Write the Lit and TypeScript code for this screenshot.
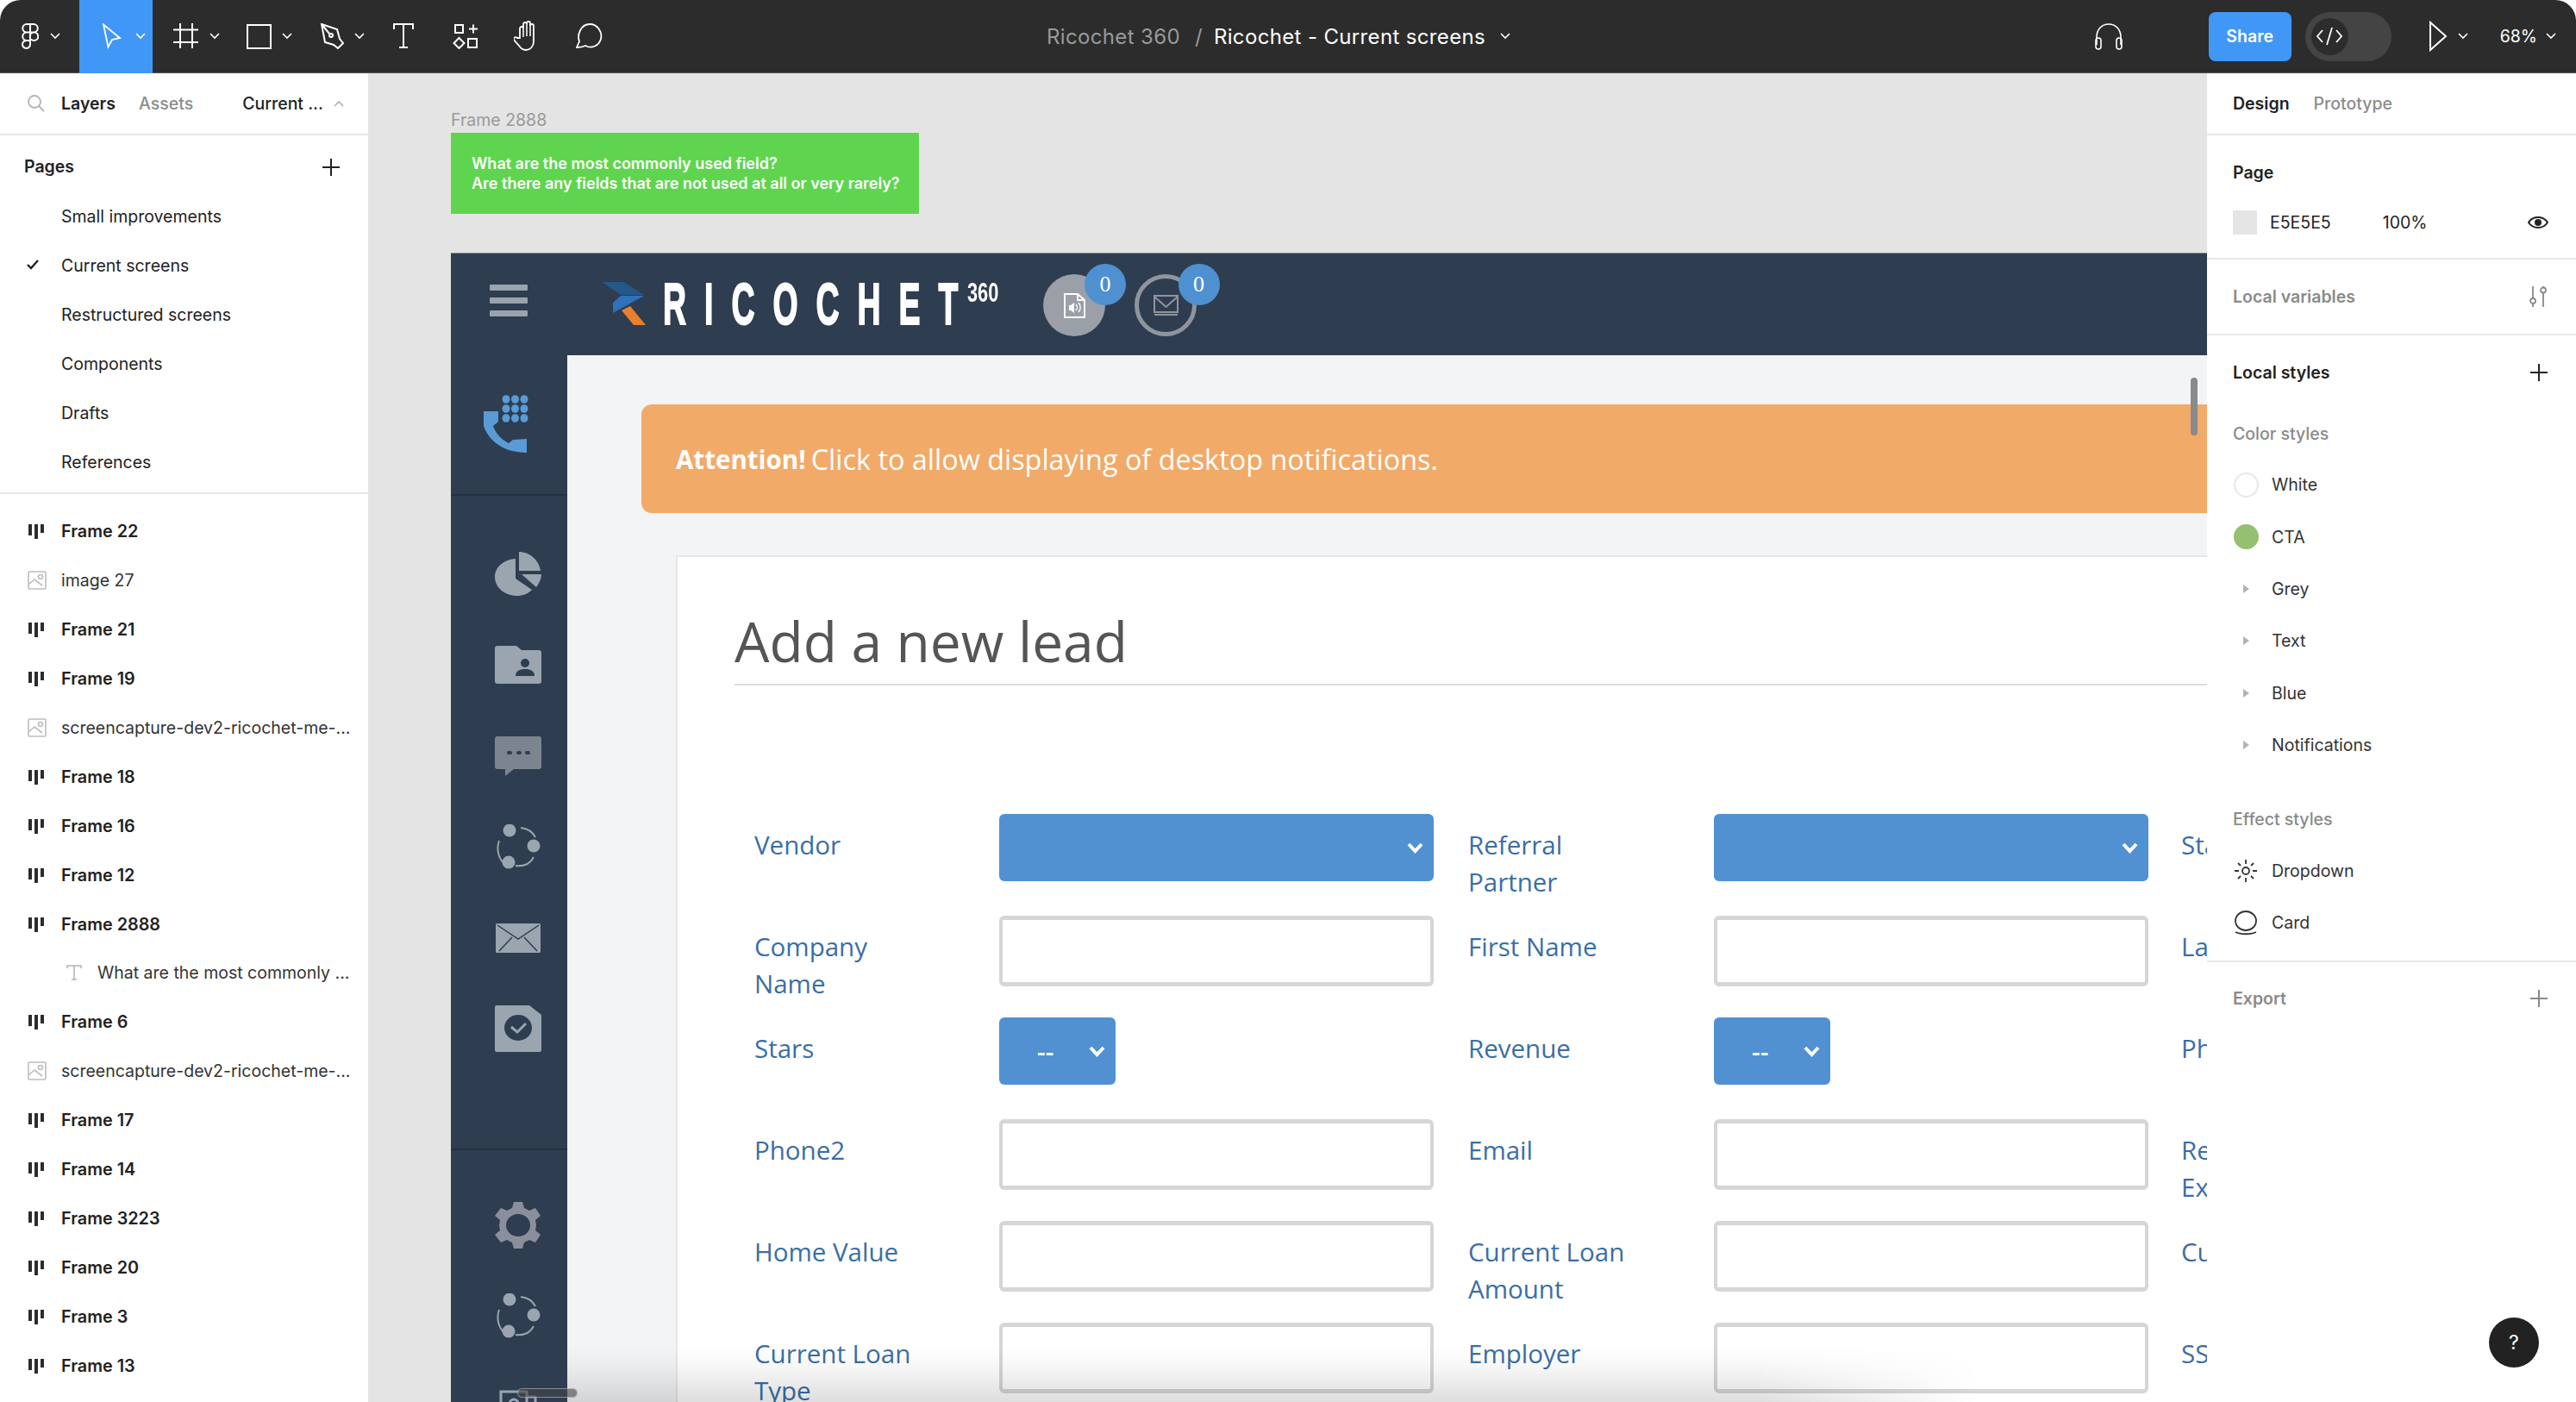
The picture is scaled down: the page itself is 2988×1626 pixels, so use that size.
import { LitElement, html, css, svg } from "lit";
import { customElement } from "lit/decorators.js";

const chev = html`<svg class="chev" viewBox="0 0 14 10"><path d="M2 2l5 5 5-5" fill="none" stroke="#fff" stroke-width="1.6"/></svg>`;
const s = (w: number, h: number, body: unknown, cls = "") =>
  html`<svg class=${cls} width=${w} height=${h} viewBox="0 0 ${w} ${h}" fill="none" stroke="#fff" stroke-width="2">${body}</svg>`;

const icons = {
  figma: s(20, 30, svg`<path d="M10 1H6a4.5 4.5 0 000 9.500h4zM10 1h4a4.500 4.500 0 010 9.500h-4zM10 10.500H6a4.500 4.500 0 000 9.500h4zM14.500 10.500a4.700 4.700 0 110 9.500 4.700 4.700 0 010-9.500zM10 20H6a4.500 4.500 0 104 4.500z"/>`),
  cursor: s(24, 30, svg`<path d="M3 1.500L22 17l-9 2-4.500 8.500z" stroke-width="1.800" transform="translate(-1 0)"/>`),
  frame: s(30, 30, svg`<path d="M8 0v29M22 0v29M0 7.500h29M0 22h29"/>`),
  rect: s(29, 29, svg`<rect x="1" y="1" width="27" height="27"/>`),
  pen: s(28, 30, svg`<path d="M2 1l18 6 3 11 4 5-6 6-5-4-10-3zM2 1l9 11"/><circle cx="13" cy="14" r="2"/>`),
  text: s(24, 30, svg`<path d="M1 7V1h22v6M12 1v27M7 28h10"/>`),
  comps: s(30, 30, svg`<rect x="3" y="2" width="9" height="9"/><path d="M19 6.500h10M24 1.500v10M7.500 17l6 6-6 6-6-6z"/><rect x="18" y="18" width="10" height="10"/>`),
  hand: s(32, 36, svg`<path d="M7 20V9a2 2 0 014 0v-5a2 2 0 014 0v-1a2 2 0 014 0v3a2 2 0 014 0v18c0 6-4 10-9 10-4 0-6-2-8-5l-6-7c-1-2 2-4 4-2z" stroke-width="1.800"/><path d="M11 9v10M15 4v14M19 4v14" stroke-width="1.500"/>`),
  comment: s(32, 30, svg`<path d="M1 28l3-7C1 13 6 1 16 1c9 0 15 9 13 17-2 8-11 12-18 8-2 1-6 2-10 2z" stroke-width="1.800"/>`),
  phones: s(34, 32, svg`<path d="M17 2C8 2 3 9 3 17v9M17 2c9 0 14 7 14 15v9" stroke-width="1.600"/><rect x="2" y="18" width="6" height="13" rx="3" stroke-width="1.600"/><rect x="26" y="18" width="6" height="13" rx="3" stroke-width="1.600"/>`),
  play: s(22, 36, svg`<path d="M2 2l18 16L2 34z" stroke-width="2"/>`),
  code: s(30, 24, svg`<path d="M7 5l-6 7 6 7M23 5l6 7-6 7M18 2l-6 20" stroke-width="1.800"/>`),
};

const frameIco = html`<svg class="li" width="20" height="18" viewBox="0 0 20 18"><g fill="#2c2c2c"><rect x="1" y="1" width="4" height="13"/><rect x="8" y="1" width="4" height="17"/><rect x="15" y="1" width="4" height="10"/></g></svg>`;
const imgIco = html`<svg class="li" width="22" height="22" viewBox="0 0 22 22" fill="none" stroke="#bdbdbd" stroke-width="1.600"><rect x="1" y="1" width="20" height="20" rx="1"/><circle cx="15" cy="7" r="2.500"/><path d="M1 16l7-6 9 7"/></svg>`;
const tIco = html`<svg class="li" width="20" height="20" viewBox="0 0 20 20" fill="none" stroke="#b3b3b3" stroke-width="1.500"><path d="M2 5V2h16v3M10 2v16M7 18h6"/></svg>`;

const pages = ["Small improvements", "Current screens", "Restructured screens", "Components", "Drafts", "References"];
const layers: [string, string][] = [
  ["f", "Frame 22"], ["i", "image 27"], ["f", "Frame 21"], ["f", "Frame 19"],
  ["i", "screencapture-dev2-ricochet-me-..."], ["f", "Frame 18"], ["f", "Frame 16"], ["f", "Frame 12"],
  ["f", "Frame 2888"], ["t", "What are the most commonly ..."], ["f", "Frame 6"],
  ["i", "screencapture-dev2-ricochet-me-..."], ["f", "Frame 17"], ["f", "Frame 14"], ["f", "Frame 3223"],
  ["f", "Frame 20"], ["f", "Frame 3"], ["f", "Frame 13"],
];

const net = html`<svg width="54" height="52" viewBox="0 0 54 52" fill="none"><path d="M5 19C1 30 5 42 13 47M30 4c9 1 14 5 17 11M24 48c9 1 17-2 21-10" stroke="#9aa5b0" stroke-width="2"/><circle cx="17" cy="7" r="7.500" fill="#9aa5b0"/><circle cx="45" cy="25" r="7.500" fill="#9aa5b0"/><circle cx="16" cy="44" r="7.500" fill="#9aa5b0"/></svg>`;
const side = [
  html`<svg width="54" height="52" viewBox="0 0 54 52"><path d="M24 8v23l19 13C38 49 32 51 26 51 11 51 0 41 0 29 0 18 10 9 24 8z" fill="#9aa5b0"/><path d="M28 0c12 0 23 9 25 22H28z" fill="#9aa5b0"/><path d="M31 26h23c0 5-3 11-6 15z" fill="#9aa5b0"/></svg>`,
  html`<svg width="54" height="44" viewBox="0 0 54 44"><path d="M3 0h22l6 5h20a3 3 0 013 3v33a3 3 0 01-3 3H3a3 3 0 01-3-3V3a3 3 0 013-3z" fill="#9aa5b0"/><ellipse cx="35" cy="20" rx="5" ry="5" fill="#2e3d50"/><path d="M24 35c0-6 5-8 11-8s11 2 11 8z" fill="#2e3d50"/></svg>`,
  html`<svg width="54" height="46" viewBox="0 0 54 46"><path d="M3 0h48a3 3 0 013 3v32a3 3 0 01-3 3H22l-10 8 0-8H3a3 3 0 01-3-3V3a3 3 0 013-3z" fill="#7c848f"/><g fill="#2e3d50"><rect x="14" y="17" width="6" height="4" rx="2"/><rect x="25" y="17" width="6" height="4" rx="2"/><rect x="35" y="17" width="6" height="4" rx="2"/></g></svg>`,
  net,
  html`<svg width="52" height="34" viewBox="0 0 52 34"><rect width="52" height="34" rx="1.500" fill="#9aa5b0"/><path d="M2 2l24 16L50 2M4 32l15-16M48 32L33 16" fill="none" stroke="#2e3d50" stroke-width="1.500"/></svg>`,
  html`<svg width="54" height="54" viewBox="0 0 54 54"><path d="M2 0h38l14 11v41a2 2 0 01-2 2H2a2 2 0 01-2-2V2a2 2 0 012-2z" fill="#9aa5b0"/><ellipse cx="27" cy="26" rx="16" ry="15" fill="#2e3d50"/><path d="M19 25l7 6 10-10" fill="none" stroke="#9aa5b0" stroke-width="3"/></svg>`,
];
const gear = html`<svg width="54" height="54" viewBox="0 0 54 54"><path d="M22 0h10l2 7 6 3 7-3 6 9-6 5 1 6-1 6 6 5-6 9-7-3-6 3-2 7H22l-2-7-6-3-7 3-7-9 6-5-1-6 1-6-6-5 7-9 7 3 6-3z" fill="#8b8f9c"/><ellipse cx="27" cy="27" rx="14" ry="13" fill="#2e3d50"/></svg>`;
const contact = html`<svg width="44" height="40" viewBox="0 0 44 40" fill="none" stroke="#9aa5b0" stroke-width="3"><rect x="2" y="2" width="30" height="36"/><path d="M32 8h10v30H32"/><circle cx="17" cy="16" r="5"/></svg>`;

const fields: [string, string][] = [
  ["Vendor", "sel"], ["Referral<br>Partner", "sel"], ["Stage", ""],
  ["Company<br>Name", "inp"], ["First Name", "inp"], ["Last Name", ""],
  ["Stars", "mini"], ["Revenue", "mini"], ["Phone", ""],
  ["Phone2", "inp"], ["Email", "inp"], ["Referral<br>Exec", ""],
  ["Home Value", "inp"], ["Current Loan<br>Amount", "inp"], ["Current", ""],
  ["Current Loan<br>Type", "inp"], ["Employer", "inp"], ["SSN", ""],
];
const selChev = html`<svg class="schev" width="23" height="15" viewBox="0 0 23 15"><path d="M4 3l7.500 8L19 3" fill="none" stroke="#fff" stroke-width="4"/></svg>`;

@customElement("app-root")
export class AppRoot extends LitElement {
  static styles = css`
    :host { display: block; width: 2988px; height: 1626px; overflow: hidden; background: #fff; font-family: Inter, "Liberation Sans", sans-serif; color: #222; }
    * { box-sizing: border-box; }
    .top { height: 85px; background: #2c2c2c; border-radius: 24px 24px 0 0; display: flex; align-items: center; color: #fff; border-bottom: 1px solid #555; }
    .tools { display: flex; height: 85px; width: 717px; flex: none; }
    .tool { display: flex; align-items: center; width: 85px; padding-left: 24px; gap: 11px; flex: none; }
    .tool svg:first-child { flex: none; }
    .tool.first { width: 92px; padding-left: 25px; gap: 12px; }
    .tool.on { background: #4097f6; padding-left: 26px; gap: 14px; }
    .tool.plain { justify-content: center; padding: 0; width: 72px; }
    .chev { width: 14px; height: 10px; flex: none; }
    .title { margin-left: 497px; font-size: 24px; display: flex; align-items: center; letter-spacing: .35px; white-space: nowrap; }
    .title .dim { color: #9a9a9a; }
    .title .slash { color: #9a9a9a; margin: 0 13px 0 17px; }
    .title .chev { margin-left: 16px; }
    .tright { margin-left: auto; display: flex; align-items: center; padding-right: 22px; }
    .share { width: 96px; height: 57px; background: #4097f6; border-radius: 8px; font-size: 19.500px; font-weight: 600; display: flex; align-items: center; justify-content: center; margin: 0 16px 0 99px; }
    .toggle { width: 100px; height: 57px; background: #444; border-radius: 29px; padding: 7px; margin-right: 43px; }
    .knob { width: 43px; height: 43px; border-radius: 50%; background: #2c2c2c; display: flex; align-items: center; justify-content: center; }
    .pct { font-size: 19.500px; margin: 0 9px 0 auto; }
    .play { display: flex; align-items: center; gap: 11px; margin-right: 36px; }
    .main { display: flex; height: 1541px; }
    .left { width: 427px; flex: none; overflow: hidden; background: #fff; position: relative; z-index: 2; }
    .lhead { height: 72px; border-bottom: 2px solid #e8e8e8; display: flex; align-items: center; font-size: 19.500px; font-weight: 600; padding-left: 32px; white-space: nowrap; }
    .lhead .mag { margin-right: 19px; flex: none; }
    .lhead .dim { color: #8c8c8c; font-weight: 500; margin-left: 27px; }
    .lhead .cur { color: #222; font-weight: 500; margin-left: 57px; }
    .lhead .up { margin-left: 11px; }
    .sec { display: flex; justify-content: space-between; align-items: center; font-weight: 600; font-size: 19.500px; padding: 0 33px 0 28px; height: 74px; }
    .sec span { line-height: 1; }
    .pages { border-bottom: 2px solid #e8e8e8; padding-bottom: 7px; margin-top: -9px; }
    .row { height: 57px; display: flex; align-items: center; font-size: 19.500px; padding-left: 71px; position: relative; white-space: nowrap; }
    .row .tick { position: absolute; left: 30px; top: 21px; }
    .lrow { height: 56.900px; display: flex; align-items: center; font-size: 19.500px; padding-left: 32px; white-space: nowrap; color: #333; }
    .lrow.f { font-weight: 600; color: #222; font-size: 19.800px; }
    .lrow.t { padding-left: 76px; }
    .ico { width: 39px; flex: none; display: flex; }
    .lrow.t .ico { width: 37px; }
    .layers { padding-top: 15px; }
    .canvas { flex: 1; background: #e4e4e4; padding: 40px 0 0 96px; overflow: hidden; position: relative; min-width: 0; }
    .flabel { font-size: 19.500px; color: #999; line-height: 29px; }
    .green { width: 543px; height: 94px; background: #5fd54f; color: #fff; font-weight: 600; font-size: 18px; line-height: 23px; padding: 24px 24px; white-space: nowrap; }
    .app { margin-top: 45px; width: 2037px; height: 1333px; background: #2e3d50; overflow: hidden; border-top: 1px solid #8c939b; }
    .ahead { height: 118px; display: flex; align-items: center; position: relative; }
    .burger { width: 44px; margin-left: 45px; display: grid; gap: 8px; margin-top: -10px; flex: none; }
    .burger i { display: block; height: 7px; border-radius: 1px; background: #9aa3ad; }
    .logo { margin-left: 86px; display: flex; align-items: flex-start; margin-top: -2px; flex: none; }
    .word { color: #fff; font-family: "Liberation Sans", sans-serif; font-weight: 700; font-size: 68px; line-height: 50px; height: 50px; width: 346px; margin-left: 20px; transform-origin: 0 50%; transform: scaleX(.55); white-space: nowrap; -webkit-text-stroke: 2px #fff; }
    .word span { letter-spacing: 38.200px; }
    .sup { color: #fff; font-family: "Liberation Sans", sans-serif; font-weight: 700; font-size: 32px; line-height: 24px; transform-origin: 0 0; transform: scaleX(.68); margin-left: 7px; width: 40px; }
    .circs { display: flex; margin-left: 48px; margin-top: 2px; gap: 34px; flex: none; }
    .circ { width: 72px; height: 72px; border-radius: 50%; position: relative; background: #9a9fa8; display: flex; align-items: center; justify-content: center; }
    .circ.out { background: none; border: 5px solid #8f959d; }
    .badge { position: absolute; width: 48px; height: 48px; border-radius: 50%; background: #4f90d0; color: #fff; font-family: "Liberation Serif", serif; font-size: 26px; display: flex; align-items: center; justify-content: center; left: 48px; top: -12px; }
    .circ.out .badge { left: 45.500px; top: -17px; }
    .abody { display: flex; height: 1215px; }
    .side { width: 135px; flex: none; }
    .sphone { height: 163px; border-bottom: 2px solid #27313f; padding: 45px 0 0 38px; }
    .sgroup { padding-top: 38px; height: 757px; }
    .sgroup + .sgroup { height: auto; border-top: 2px solid #27313f; padding-top: 34px; }
    .sitem { height: 105.500px; display: flex; align-items: center; justify-content: center; padding-left: 20px; }
    .content { flex: 1; background: #f3f4f6; min-width: 0; overflow: hidden; font-family: "Open Sans", sans-serif; }
    .alert { margin: 57px 0 0 86px; height: 126px; background: #f2aa68; border-radius: 12px 0 0 12px; color: #fff; font-size: 32.400px; display: flex; align-items: center; padding-left: 40px; white-space: nowrap; }
    .alert b { font-weight: 700; margin-right: 6px; font-size: 29.500px; }
    .card { margin: 49px 0 0 126px; height: 1000px; background: #fff; border: 2px solid #e6e6e6; border-right: 0; padding: 0 0 0 66px; }
    .h1 { height: 149px; font-size: 64px; color: #555; border-bottom: 2px solid #ddd; padding-top: 54px; line-height: 88px; }
    .form { margin-top: 149px; display: grid; grid-template-columns: 284px 504px 40px 285px 504px 38px 300px; grid-auto-rows: 118px; padding-left: 23px; }
    .lbl { font-size: 29.500px; line-height: 43px; color: #3a6ea5; padding-top: 14px; white-space: nowrap; }
    .ctl { height: 78px; }
    .sel { background: #5191d1; border-radius: 6px; display: flex; align-items: center; justify-content: flex-end; padding-right: 10px; }
    .mini { width: 135px; background: #5191d1; border-radius: 6px; display: flex; align-items: center; justify-content: space-between; color: #fff; font-size: 30px; padding: 0 10px 0 44px; font-weight: 600; }
    .inp { border: 4px solid #d6d6d6; border-width: 5px 4px; border-radius: 6px; background: #fff; height: 82px; }
    .sb { position: absolute; }
    .sb.v { left: 2114px; top: 353px; width: 8px; height: 67px; background: #8a8a8a; border-radius: 4px; }
    .sb.h { left: 173px; top: 1525px; width: 70px; height: 11px; background: rgba(70,70,70,.6); border: 1px solid rgba(255,255,255,.4); border-radius: 6px; }
    .shade { position: absolute; left: 231px; width: 1640px; bottom: 0; height: 64px; pointer-events: none; background: linear-gradient(to top, rgba(0,0,0,.13), rgba(0,0,0,.03) 65%, rgba(0,0,0,0)); -webkit-mask-image: linear-gradient(to right, #000 84%, transparent); mask-image: linear-gradient(to right, #000 84%, transparent); }
    .right { width: 428px; flex: none; background: #fff; font-size: 19.500px; position: relative; z-index: 2; }
    .rhead { height: 72px; border-bottom: 2px solid #e8e8e8; display: flex; align-items: center; padding-left: 30px; gap: 28px; font-weight: 600; }
    .rhead .dim { color: #8c8c8c; font-weight: 500; }
    .rpage { height: 144px; padding: 28px 30px 0; border-bottom: 2px solid #e8e8e8; }
    .rt { font-weight: 600; line-height: 30px; }
    .rfill { display: flex; align-items: center; margin-top: 29px; height: 28px; }
    .swatch { width: 28px; height: 28px; background: #e5e5e5; margin-right: 15px; }
    .pc { margin-left: 60px; }
    .eye { margin-left: auto; margin-right: 2px; }
    .rsec { padding: 0 33px 0 30px; display: flex; align-items: center; justify-content: space-between; font-weight: 600; }
    .rvars { height: 88px; color: #8a8a8a; border-bottom: 2px solid #e8e8e8; }
    .rsty { height: 86px; }
    .rsub { height: 40px; padding: 0 30px; display: flex; align-items: center; color: #8a8a8a; font-weight: 500; }
    .rsub.first { margin-top: 8px; }
    .ritem { height: 60.400px; display: flex; align-items: center; padding-left: 30px; font-weight: 400; color: #333; }
    .ritem.a { margin-top: 9px; }
    .ritem .ib { width: 45px; flex: none; display: flex; align-items: center; justify-content: center; padding-right: 15px; }
    .dot { width: 29px; height: 29px; border-radius: 50%; flex: none; }
    .dot.w { background: #fff; border: 2px solid #e8e8e8; }
    .dot.g { background: #95c06f; }
    .tri { width: 0; height: 0; border-left: 7px solid #b3b3b3; border-top: 5px solid transparent; border-bottom: 5px solid transparent; }
    .gap { height: 36px; }
    .rexp { height: 86px; color: #8a8a8a; border-top: 2px solid #e8e8e8; margin-top: 14px; }
    .help { position: absolute; left: 327px; top: 1443px; width: 58px; height: 58px; border-radius: 50%; background: #222; color: #fff; display: flex; align-items: center; justify-content: center; font-size: 23px; }
  `;

  private plus(color = "#222") {
    return html`<svg width="20" height="20" viewBox="0 0 20 20" fill="none" stroke=${color} stroke-width="2"><path d="M10 0v20M0 10h20"/></svg>`;
  }

  render() {
    return html`
      <div class="top">
        <div class="tools">
          <div class="tool first">${icons.figma}${chev}</div>
          <div class="tool on">${icons.cursor}${chev}</div>
          <div class="tool">${icons.frame}${chev}</div>
          <div class="tool">${icons.rect}${chev}</div>
          <div class="tool">${icons.pen}${chev}</div>
          <div class="tool plain">${icons.text}</div>
          <div class="tool plain">${icons.comps}</div>
          <div class="tool plain">${icons.hand}</div>
          <div class="tool plain">${icons.comment}</div>
        </div>
        <div class="title"><span class="dim">Ricochet 360</span><span class="slash">/</span><span>Ricochet - Current screens</span>${chev}</div>
        <div class="tright">
          ${icons.phones}
          <div class="share">Share</div>
          <div class="toggle"><div class="knob">${icons.code}</div></div>
          <div class="play">${icons.play}${chev}</div>
          <div class="pct">68%</div>${chev}
        </div>
      </div>
      <div class="main">
        <aside class="left">
          <div class="lhead">
            <svg class="mag" width="20" height="20" viewBox="0 0 20 20" fill="none" stroke="#b3b3b3" stroke-width="1.800"><circle cx="8" cy="8" r="7"/><path d="M13 13l6 6"/></svg>
            <span>Layers</span><span class="dim">Assets</span><span class="cur">Current ...</span>
            <svg class="up" width="14" height="10" viewBox="0 0 14 10" fill="none" stroke="#aaa" stroke-width="1.500"><path d="M2 8l5-5 5 5"/></svg>
          </div>
          <div class="sec"><span>Pages</span>${this.plus()}</div>
          <div class="pages">
            ${pages.map((p, i) => html`<div class="row">${i === 1 ? html`<svg class="tick" width="16" height="14" viewBox="0 0 16 14" fill="none" stroke="#222" stroke-width="2.400"><path d="M2 7l4 4 8-9"/></svg>` : ""}${p}</div>`)}
          </div>
          <div class="layers">
            ${layers.map(([k, n]) => html`<div class="lrow ${k}"><span class="ico">${k === "f" ? frameIco : k === "i" ? imgIco : tIco}</span>${n}</div>`)}
          </div>
        </aside>
        <section class="canvas">
          <div class="flabel">Frame 2888</div>
          <div class="green">What are the most commonly used field?<br>Are there any fields that are not used at all or very rarely?</div>
          <div class="app">
            <div class="ahead">
              <div class="burger"><i></i><i></i><i></i></div>
              <div class="logo">
                <svg width="51" height="50" viewBox="0 0 51 50"><path d="M0 0h25l24 15H22z" fill="#24578a"/><path d="M22 16h27L13 36V24z" fill="#2f72b8"/><path d="M23 33l10-5 18 22H37z" fill="#e8802e"/></svg>
                <div class="word"><span>RICOCHE</span>T</div><div class="sup">360</div>
              </div>
              <div class="circs">
                <div class="circ">
                  <svg width="25" height="29" viewBox="0 0 25 29" fill="none" stroke="#fff" stroke-width="2"><path d="M1 1h15l8 7v20H1zM16 1v7h8"/><path d="M6 14v6h2l4 3V11l-4 3z" fill="#fff" stroke="none"/><path d="M14 13a5 5 0 010 7M17 11a8 8 0 010 11" stroke-width="1.300"/></svg>
                  <span class="badge">0</span>
                </div>
                <div class="circ out">
                  <svg width="29" height="24" viewBox="0 0 29 24" fill="none" stroke="#8f959d" stroke-width="2"><rect x="1" y="1" width="27" height="19"/><path d="M1 2l13.500 12L28 2M1 23h27"/></svg>
                  <span class="badge">0</span>
                </div>
              </div>
            </div>
            <div class="abody">
              <div class="side">
                <div class="sphone">
                  <svg width="54" height="68" viewBox="0 0 54 68"><g fill="#5a9bd5">${[0, 1, 2].flatMap((r) => [0, 1, 2].map((c) => svg`<ellipse cx=${26 + c * 10.5} cy=${6 + r * 11} rx="4.500" ry="4.800"/>`))}<path d="M0 20h17v12l-6 5c3 9 10 16 18 20l5-4 16-1v16C30 68 8 60 0 37z"/></g></svg>
                </div>
                <div class="sgroup">${side.map((i) => html`<div class="sitem">${i}</div>`)}</div>
                <div class="sgroup">
                  <div class="sitem">${gear}</div>
                  <div class="sitem">${net}</div>
                  <div class="sitem">${contact}</div>
                </div>
              </div>
              <div class="content">
                <div class="alert"><b>Attention!</b> Click to allow displaying of desktop notifications.</div>
                <div class="card">
                  <div class="h1">Add a new lead</div>
                  <div class="form">
                    ${fields.map(([l, k], i) => html`
                      <div class="lbl" .innerHTML=${l}></div>
                      ${k === "sel" ? html`<div class="ctl sel">${selChev}</div>` : k === "mini" ? html`<div class="ctl mini"><span>--</span>${selChev}</div>` : k === "inp" ? html`<div class="ctl inp"></div>` : ""}
                      ${i % 3 !== 2 ? html`<div></div>` : ""}
                    `)}
                  </div>
                </div>
              </div>
            </div>
          </div>
          <div class="shade"></div>
          <div class="sb v"></div>
          <div class="sb h"></div>
        </section>
        <aside class="right">
          <div class="rhead"><span>Design</span><span class="dim">Prototype</span></div>
          <div class="rpage">
            <div class="rt">Page</div>
            <div class="rfill"><span class="swatch"></span>E5E5E5<span class="pc">100%</span>
              <svg class="eye" width="24" height="16" viewBox="0 0 24 16" fill="none" stroke="#222" stroke-width="2"><path d="M1 8c5-8 17-8 22 0-5 8-17 8-22 0z"/><circle cx="12" cy="8" r="3" fill="#222"/></svg>
            </div>
          </div>
          <div class="rsec rvars">Local variables
            <svg width="22" height="26" viewBox="0 0 22 26" fill="none" stroke="#8a8a8a" stroke-width="1.800"><path d="M5 1v14M5 21v4M17 1v1M17 9v16"/><circle cx="5" cy="18" r="3"/><circle cx="17" cy="5.500" r="3"/></svg>
          </div>
          <div class="rsec rsty">Local styles${this.plus()}</div>
          <div class="rsub first">Color styles</div>
          <div class="ritem a"><span class="ib"><span class="dot w"></span></span>White</div>
          <div class="ritem"><span class="ib"><span class="dot g"></span></span>CTA</div>
          ${["Grey", "Text", "Blue", "Notifications"].map((n) => html`<div class="ritem"><span class="ib"><span class="tri"></span></span>${n}</div>`)}
          <div class="gap"></div>
          <div class="rsub">Effect styles</div>
          <div class="ritem a"><span class="ib">
            <svg width="28" height="28" viewBox="0 0 28 28" fill="none" stroke="#333" stroke-width="1.800"><circle cx="14" cy="14" r="4"/><path d="M14 1v5M14 22v5M1 14h5M22 14h5M5 5l3 3M20 20l3 3M23 5l-3 3M5 23l3-3"/></svg>
          </span>Dropdown</div>
          <div class="ritem"><span class="ib">
            <svg width="28" height="30" viewBox="0 0 28 30" fill="none" stroke="#333" stroke-width="1.800"><ellipse cx="14" cy="13" rx="12" ry="11"/><path d="M2 26c6 3 18 3 24 0"/></svg>
          </span>Card</div>
          <div class="rsec rexp">Export${this.plus("#8a8a8a")}</div>
          <div class="help">?</div>
        </aside>
      </div>
    `;
  }
}
